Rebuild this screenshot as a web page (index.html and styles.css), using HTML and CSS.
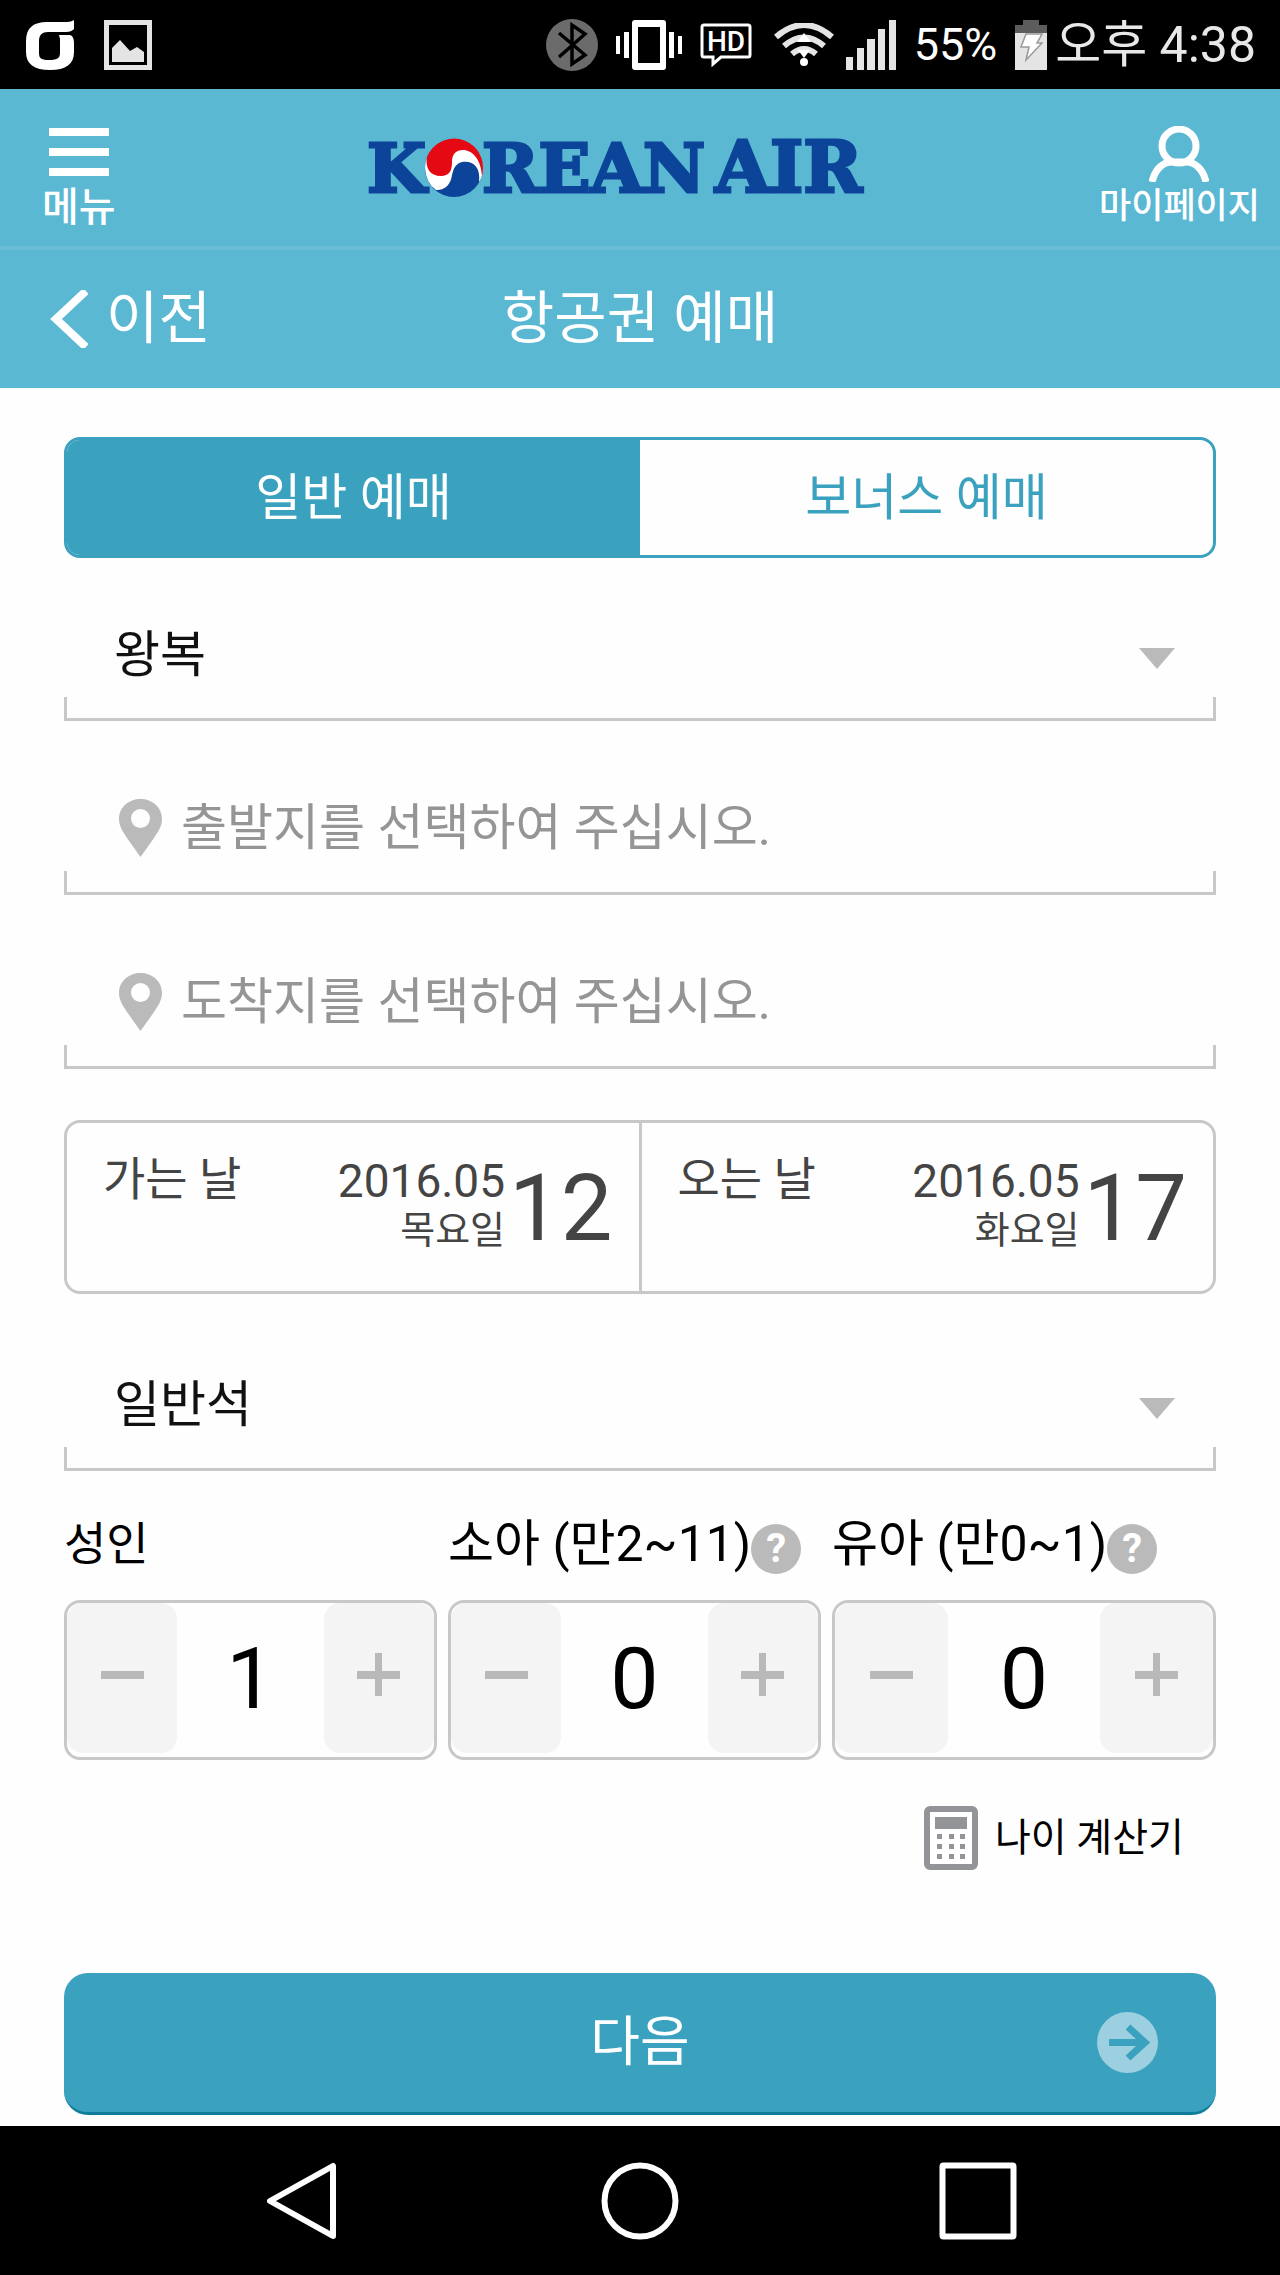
FILE: index.html
```html
<!DOCTYPE html>
<html lang="ko">
<head>
<meta charset="utf-8">
<meta name="viewport" content="width=device-width, initial-scale=1">
<title>항공권 예매</title>
<link rel="stylesheet" href="styles.css">
</head>
<body>
<div class="status">
  <div class="status-group status-left">
    <svg width="48" height="50" viewBox="0 0 48 50" aria-hidden="true"><path fill="#fff" d="M48 0v9c-2 2-4 3-8 3H22c-6 0-9 3-9 9v12c0 6 3 7 10 7s11-1 11-7V19l-1-4h11c3 1 4 4 4 8v9c0 12-8 18-24 18S0 44 0 32V21C0 8 7 2 21 2h20c3 0 5-1 7-2z"/></svg>
    <svg width="48" height="50" viewBox="0 0 48 50" aria-hidden="true"><rect x="2.500" y="2.500" width="43" height="45" fill="none" stroke="#e4e4e4" stroke-width="5"/><path fill="#e4e4e4" d="M8 28l8-8 10 11 7-4 7 5v10H8z"/></svg>
  </div>
  <div class="status-group status-right">
    <svg width="52" height="52" viewBox="0 0 52 52" aria-hidden="true"><circle cx="26" cy="26" r="26" fill="#6b6b6b"/><path d="M13 14l26 22-13 9V6l13 9-26 23" fill="none" stroke="#000" stroke-width="3.500"/></svg>
    <svg width="66" height="50" viewBox="0 0 66 50" aria-hidden="true"><path fill="#fff" fill-rule="evenodd" d="M19 0h28q3 0 3 3v44q0 3-3 3H19q-3 0-3-3V3q0-3 3-3zM22 7v36h22V7zM0 16h4v18H0zM8 12h5v26H8zM53 12h5v26h-5zM62 16h4v18h-4z"/></svg>
    <svg width="52" height="44" viewBox="0 0 52 44" aria-hidden="true"><path d="M4 2h44q2 0 2 2v28q0 2-2 2H21l-8 7v-7H4q-2 0-2-2V4q0-2 2-2z" fill="none" stroke="#fff" stroke-width="3"/><text x="26" y="28" text-anchor="middle" class="hd">HD</text></svg>
    <svg class="wifi" width="60" height="44" viewBox="0 0 60 44" aria-hidden="true"><g fill="none" stroke="#e4e4e4" stroke-width="6"><path d="M2 14Q30-10 58 14"/><path d="M10 23q20-17 40 0"/><path d="M18 31q12-10 24 0"/></g><path fill="#fff" d="M30 10l7 9H23zM24 27h12l-6 8z"/><circle cx="30" cy="39" r="4" fill="#fff"/></svg>
    <svg width="50" height="50" viewBox="0 0 50 50" aria-hidden="true"><path fill="#e4e4e4" d="M0 37h7v13H0zM11 28h7v22h-7zM21 19h8v31h-8zM32 9h7v41h-7zM43 0h7v50h-7z"/></svg>
    <span class="battery-text">55%</span>
    <svg width="32" height="50" viewBox="0 0 32 50" aria-hidden="true"><path fill="#5c5c5c" d="M8 0h16v5h8v9H0V5h8z"/><path fill="#e4e4e4" d="M0 13h32v37H0z"/><path fill="#fff" stroke="#999" stroke-width="1.500" d="M11 14h16l-5 9h5L11 40l3-13H6z"/></svg>
    <span class="clock">오후 4:38</span>
  </div>
</div>

<header class="brand-bar">
  <button class="brand-button menu-button" type="button">
    <svg width="60" height="48" viewBox="0 0 60 48" aria-hidden="true"><path fill="#fff" d="M0 0h60v8H0zM0 20h60v8H0zM0 40h60v8H0z"/></svg>
    <span class="menu-label">메뉴</span>
  </button>
  <a class="logo" href="#" aria-label="KOREAN AIR">
    <svg width="506" height="100" viewBox="-4 -18 506 100">
      <g class="logo-text"><text x="0" y="55">K</text><text x="115" y="55">REAN</text><text class="logo-air" x="348" y="55">AIR</text></g>
      <circle cx="87" cy="31" r="29" fill="#0b4498"/>
      <path fill="#fff" d="M60 21a29 29 0 0 1 56 10q0 8-4 14c2-16-7-22-17-20-7 2-8 6-10 13-2 13-10 15-16 15q-10-7-11-22 0-5 2-10z"/>
      <path fill="#e50914" d="M60 20A29 29 0 0 1 116 31q0 5-1 8c-1-17-10-26-19-26-7 0-11 4-11 12 0 9-3 14-11 14-11 0-16-8-14-19z"/>
    </svg>
  </a>
  <a class="brand-button my-button" href="#">
    <svg width="60" height="56" viewBox="0 0 60 56" aria-hidden="true"><g fill="none" stroke="#fff" stroke-width="7"><ellipse cx="30" cy="20" rx="17" ry="17"/><path d="M3 56c3-13 11-20 20-20h14c9 0 17 7 20 20"/></g></svg>
    <span class="my-label">마이페이지</span>
  </a>
</header>

<div class="title-bar">
  <a class="back" href="#">
    <svg width="38" height="58" viewBox="0 0 38 58" aria-hidden="true"><path d="M36 1L6 29l30 28" fill="none" stroke="#fff" stroke-width="8"/></svg>
    이전
  </a>
  <h1>항공권 예매</h1>
</div>

<main>
  <div class="tabs">
    <button class="tab tab-on" type="button" aria-pressed="true">일반 예매</button>
    <button class="tab" type="button" aria-pressed="false">보너스 예매</button>
  </div>

  <div class="field">
    <select aria-label="여정"><option>왕복</option><option>편도</option></select>
    <svg class="caret" width="36" height="21" viewBox="0 0 36 21" aria-hidden="true"><path fill="#bababa" d="M0 0h36L18 21z"/></svg>
  </div>
  <div class="field place">
    <svg width="43" height="58" viewBox="0 0 43 58" aria-hidden="true"><path fill="#bababa" fill-rule="evenodd" d="M21.500 0C33 0 43 8 43 20c0 8-5 14-8 19L21.500 58 8 39C5 34 0 28 0 20 0 8 10 0 21.500 0zm0 10a9.500 9.500 0 1 0 0 19 9.500 9.500 0 0 0 0-19z"/></svg>
    <input type="text" aria-label="출발지" placeholder="출발지를 선택하여 주십시오.">
  </div>
  <div class="field place">
    <svg width="43" height="58" viewBox="0 0 43 58" aria-hidden="true"><path fill="#bababa" fill-rule="evenodd" d="M21.500 0C33 0 43 8 43 20c0 8-5 14-8 19L21.500 58 8 39C5 34 0 28 0 20 0 8 10 0 21.500 0zm0 10a9.500 9.500 0 1 0 0 19 9.500 9.500 0 0 0 0-19z"/></svg>
    <input type="text" aria-label="도착지" placeholder="도착지를 선택하여 주십시오.">
  </div>

  <div class="dates">
    <button class="date" type="button">
      <span class="date-label">가는 날</span>
      <span class="date-month"><span class="ym">2016.05</span><span class="weekday">목요일</span></span>
      <span class="day">12</span>
    </button>
    <button class="date" type="button">
      <span class="date-label">오는 날</span>
      <span class="date-month"><span class="ym">2016.05</span><span class="weekday">화요일</span></span>
      <span class="day">17</span>
    </button>
  </div>

  <div class="field cabin">
    <select aria-label="좌석 등급"><option>일반석</option><option>프레스티지석</option></select>
    <svg class="caret" width="36" height="21" viewBox="0 0 36 21" aria-hidden="true"><path fill="#bababa" d="M0 0h36L18 21z"/></svg>
  </div>

  <div class="passengers">
    <div class="passenger">
      <div class="passenger-head"><label class="adult-label" for="adult">성인</label></div>
      <div class="counter">
        <button type="button" aria-label="성인 줄이기"><svg width="43" height="43" viewBox="0 0 43 43"><path fill="#b9b9b9" d="M0 18h43v8H0z"/></svg></button>
        <input id="adult" type="text" inputmode="numeric" value="1">
        <button type="button" aria-label="성인 늘리기"><svg width="43" height="43" viewBox="0 0 43 43"><path fill="#b9b9b9" d="M0 18h18V0h7v18h18v8H25v17h-7V26H0z"/></svg></button>
      </div>
    </div>
    <div class="passenger">
      <div class="passenger-head"><label for="child">소아 (만2~11)</label><button class="help" type="button" aria-label="소아 도움말">?</button></div>
      <div class="counter">
        <button type="button" aria-label="소아 줄이기"><svg width="43" height="43" viewBox="0 0 43 43"><path fill="#b9b9b9" d="M0 18h43v8H0z"/></svg></button>
        <input id="child" type="text" inputmode="numeric" value="0">
        <button type="button" aria-label="소아 늘리기"><svg width="43" height="43" viewBox="0 0 43 43"><path fill="#b9b9b9" d="M0 18h18V0h7v18h18v8H25v17h-7V26H0z"/></svg></button>
      </div>
    </div>
    <div class="passenger">
      <div class="passenger-head"><label for="infant">유아 (만0~1)</label><button class="help" type="button" aria-label="유아 도움말">?</button></div>
      <div class="counter">
        <button type="button" aria-label="유아 줄이기"><svg width="43" height="43" viewBox="0 0 43 43"><path fill="#b9b9b9" d="M0 18h43v8H0z"/></svg></button>
        <input id="infant" type="text" inputmode="numeric" value="0">
        <button type="button" aria-label="유아 늘리기"><svg width="43" height="43" viewBox="0 0 43 43"><path fill="#b9b9b9" d="M0 18h18V0h7v18h18v8H25v17h-7V26H0z"/></svg></button>
      </div>
    </div>
  </div>

  <a class="age-link" href="#">
    <svg width="54" height="64" viewBox="0 0 54 64" aria-hidden="true"><rect x="3" y="3" width="48" height="58" rx="3" fill="#fff" stroke="#939498" stroke-width="6"/><path fill="#939498" d="M11 11h32v12H11zM13 28h5v5h-5zM25 28h5v5h-5zM36 28h5v5h-5zM13 38h5v5h-5zM25 38h5v5h-5zM36 38h5v5h-5zM13 48h5v5h-5zM25 48h5v5h-5zM36 48h5v5h-5z"/></svg>
    나이 계산기
  </a>

  <button class="next" type="button">
    <span>다음</span>
    <svg width="61" height="61" viewBox="0 0 61 61" aria-hidden="true"><circle cx="30.500" cy="30.500" r="30.500" fill="#9ccfdf"/><path d="M12 30.500h36M31 15l17 15.500L31 46" fill="none" stroke="#3aa1be" stroke-width="7"/></svg>
  </button>
</main>

<nav class="system-nav">
  <button type="button" aria-label="뒤로"><svg width="78" height="78" viewBox="0 0 78 78"><path d="M70 4v70L7 39z" fill="none" stroke="#fff" stroke-width="6" stroke-linejoin="round"/></svg></button>
  <button type="button" aria-label="홈"><svg width="78" height="78" viewBox="0 0 78 78"><circle cx="39" cy="39" r="35.500" fill="none" stroke="#fff" stroke-width="6"/></svg></button>
  <button type="button" aria-label="최근 앱"><svg width="78" height="78" viewBox="0 0 78 78"><rect x="3.500" y="3.500" width="71" height="71" rx="1" fill="none" stroke="#fff" stroke-width="6"/></svg></button>
</nav>
</body>
</html>
```
FILE: styles.css
```css
* { box-sizing: border-box; }

body {
  margin: 0;
  min-height: 100vh;
  display: flex;
  flex-direction: column;
  background: #fefefe;
  color: #000;
  font-family: Roboto, "Noto Sans CJK KR", sans-serif;
  font-size: 50px;
}

svg { display: block; flex: none; }
a { color: inherit; text-decoration: none; }
button, input, select {
  margin: 0;
  padding: 0;
  border: 0;
  border-radius: 0;
  background: none;
  color: inherit;
  font: inherit;
}

/* Status bar */
.status {
  display: flex;
  justify-content: space-between;
  align-items: center;
  height: 89px;
  padding: 0 24px 0 26px;
  background: #000;
  color: #fff;
}
.status-group { display: flex; align-items: center; }
.status-left { gap: 30px; }
.status-right { gap: 18px; }
.wifi { margin: 0 -6px 0 4px; }
.hd { font: 500 28px Roboto, sans-serif; fill: #fff; }
.battery-text { font-size: 45px; line-height: 60px; }
.clock { margin-left: -10px; line-height: 60px; color: #e8e8e8; }

/* Brand header */
.brand-bar {
  display: flex;
  justify-content: space-between;
  padding: 37px 20px 0 24px;
  height: 161px;
  background: #5bb8d3;
  border-bottom: 4px solid #68bdd6;
  color: #fff;
}
.brand-button {
  display: flex;
  flex-direction: column;
  align-items: center;
  font-weight: 500;
}
.menu-button { padding: 2px 18px 0; gap: 8px; }
.menu-label { font-size: 40px; line-height: 48px; }
.my-label { font-size: 35px; line-height: 50px; }
.logo { margin-top: -7px; }
.logo-text {
  font: bold 68px "DejaVu Serif", serif;
  fill: #0b4498;
  stroke: #0b4498;
  stroke-width: 3px;
}
.logo-air { font-size: 71px; }

/* Title bar */
.title-bar {
  display: grid;
  grid-template-columns: 1fr auto 1fr;
  align-items: center;
  height: 138px;
  padding: 0 50px;
  background: #5bb8d3;
  color: #fff;
  font-size: 57px;
  line-height: 80px;
}
.back { display: flex; align-items: center; gap: 18px; }
h1 { margin: 0; font-size: inherit; font-weight: 400; }

main {
  flex: 1;
  display: flex;
  flex-direction: column;
  padding: 49px 5% 11px;
}

/* Booking type */
.tabs {
  display: flex;
  height: 121px;
  border: 3px solid #3aa1be;
  border-radius: 16px;
  overflow: hidden;
}
.tab { flex: 1; color: #3aa1be; line-height: 80px; }
.tab-on { background: #3aa1be; color: #fff; }

/* Underlined fields with short end ticks */
.field {
  display: flex;
  align-items: center;
  height: 134px;
  margin-top: 29px;
  padding: 4px 41px 0 50px;
  border-bottom: 3px solid #c8c8c8;
  background:
    linear-gradient(#c8c8c8, #c8c8c8) left bottom / 3px 21px no-repeat,
    linear-gradient(#c8c8c8, #c8c8c8) right bottom / 3px 21px no-repeat;
}
.field select {
  flex: 1;
  appearance: none;
  height: 80px;
  color: #111;
  outline: 0;
}
.caret { pointer-events: none; margin-top: 8px; }
.place { margin-top: 40px; padding-top: 2px; padding-left: 55px; gap: 19px; }
.place input { flex: 1; min-width: 0; height: 80px; outline: 0; }
.place input::placeholder { color: #959595; opacity: 1; }
.cabin { margin-top: 43px; }

/* Travel dates */
.dates {
  display: flex;
  margin-top: 51px;
  height: 174px;
  border: 3px solid #c8c8c8;
  border-radius: 16px;
  color: #444;
}
.date {
  flex: 1;
  display: flex;
  align-items: flex-start;
  padding: 28px 26px 0 36px;
}
.date + .date { border-left: 3px solid #c8c8c8; }
.date-label {
  flex: 1;
  text-align: left;
  font-size: 46px;
  line-height: 56px;
}
.date-month {
  display: flex;
  flex-direction: column;
  align-items: flex-end;
}
.ym { font-size: 46px; line-height: 60px; }
.weekday { font-size: 38px; line-height: 38px; }
.day { margin-left: 4px; font-size: 92px; line-height: 116px; }

/* Passenger counts */
.passengers {
  display: grid;
  grid-template-columns: minmax(0, 373fr) minmax(0, 373fr) minmax(0, 384fr);
  gap: 11px;
  margin-top: 39px;
}
.passenger-head {
  display: flex;
  align-items: flex-end;
  height: 64px;
  line-height: 60px;
  white-space: nowrap;
}
.adult-label { font-size: 46px; }
.help {
  flex: none;
  width: 50px;
  height: 50px;
  border-radius: 50%;
  background: #bababa;
  color: #fff;
  font-size: 40px;
  font-weight: 700;
  line-height: 50px;
}
.counter {
  display: flex;
  height: 160px;
  margin-top: 26px;
  padding-bottom: 4px;
  border: 3px solid #c8c8c8;
  border-radius: 16px;
}
.counter button {
  flex: 0 0 30%;
  display: flex;
  align-items: center;
  justify-content: center;
  padding-bottom: 8px;
  border-radius: 16px;
  background: #f4f4f4;
}
.counter input {
  flex: 1;
  min-width: 0;
  text-align: center;
  font-size: 86px;
  outline: 0;
}

.age-link {
  align-self: flex-end;
  display: flex;
  align-items: center;
  gap: 17px;
  margin-top: 46px;
  padding-right: 32px;
  font-size: 39px;
  line-height: 64px;
}

.next {
  display: grid;
  grid-template-columns: 1fr auto 1fr;
  align-items: center;
  height: 142px;
  margin-top: 103px;
  padding: 0 58px;
  border-bottom: 3px solid #0f7c9b;
  border-radius: 24px;
  background: #3aa1be;
  color: #fff;
  font-size: 54px;
  line-height: 80px;
}
.next span { grid-column: 2; }
.next svg { justify-self: end; }

/* System navigation */
.system-nav {
  display: flex;
  justify-content: center;
  gap: 20%;
  height: 149px;
  background: #000;
}
.system-nav button { padding: 0 2px; }
```
